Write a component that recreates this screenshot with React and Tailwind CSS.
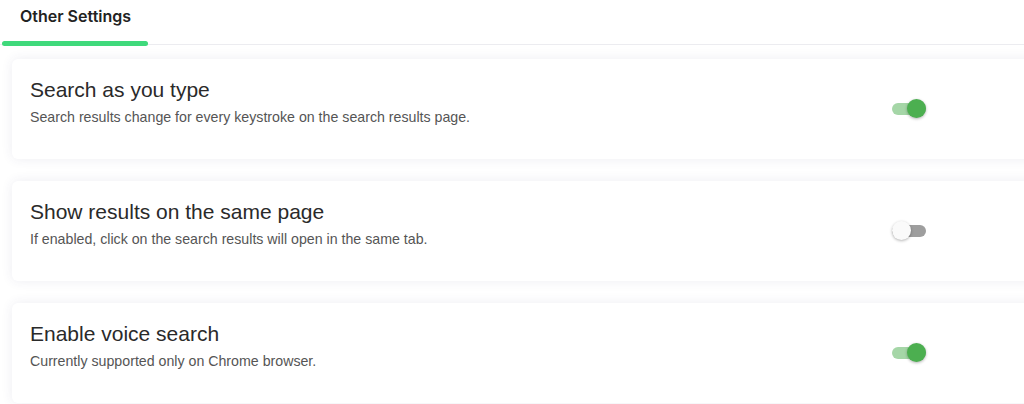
import React from "react";

function Switch({ on }) {
  return (
    <div className="relative w-[34px] h-[20px] flex items-center">
      <div
        className={
          "w-[34px] h-[12px] rounded-full " +
          (on ? "bg-[#a5d6a7]" : "bg-[#9e9e9e]")
        }
      />
      <div
        className={
          "absolute top-[0px] w-[19px] h-[19px] rounded-full shadow-[0_1px_3px_rgba(0,0,0,0.3)] " +
          (on ? "left-[15px] bg-[#4caf50]" : "left-0 bg-[#fafafa]")
        }
      />
    </div>
  );
}

function Card({ title, desc, on }) {
  return (
    <div className="w-[1060px] h-[100px] bg-white rounded-[6px] shadow-[0_0_12px_rgba(60,60,110,0.09)] flex items-center">
      <div className="flex-1 pl-[18px] self-start pt-[18px]">
        <div className="text-[21px] leading-[25px] text-[#2a2a2a]" style={{ fontFamily: '"Liberation Sans", Arial, sans-serif' }}>
          {title}
        </div>
        <div className="mt-[6px] text-[14.2px] leading-[18px] text-[#555]" style={{ fontFamily: '"Liberation Sans", Arial, sans-serif' }}>
          {desc}
        </div>
      </div>
      <div className="mr-[146px] ml-[1px]">
        <Switch on={on} />
      </div>
    </div>
  );
}

export default function App() {
  return (
    <div className="w-[1024px] h-[404px] overflow-hidden bg-white" style={{ fontFamily: '"Liberation Sans", Arial, sans-serif' }}>
      <div className="relative h-[45px] border-b border-[#ececf0]">
        <div className="pl-[20px] pt-[6px] text-[16px] leading-[20px] font-semibold text-[#222]" style={{ fontFamily: 'Inter, Roboto, sans-serif' }}>
          Other Settings
        </div>
        <div className="absolute left-[2px] top-[41px] w-[146px] h-[5px] rounded-full bg-[#3fd97b]" />
      </div>
      <div className="pl-[12px] pt-[14px] flex flex-col gap-[22px]">
        <Card
          title="Search as you type"
          desc="Search results change for every keystroke on the search results page."
          on
        />
        <Card
          title="Show results on the same page"
          desc="If enabled, click on the search results will open in the same tab."
          on={false}
        />
        <Card
          title="Enable voice search"
          desc="Currently supported only on Chrome browser."
          on
        />
      </div>
    </div>
  );
}
